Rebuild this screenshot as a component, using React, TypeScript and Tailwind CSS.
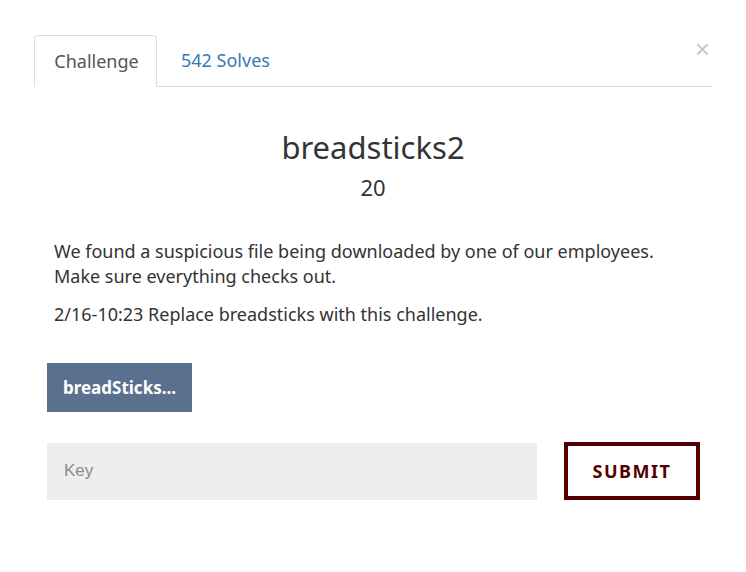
import React from "react";

export default function App() {
  return (
    <div className="relative w-[746px] h-[572px] bg-white" style={{ fontFamily: '"Noto Sans", "Open Sans", sans-serif' }}>
      <button className="absolute right-[36px] top-[36px] text-[26px] leading-none text-[#c8c8c8]" style={{ fontFamily: '"Liberation Sans", sans-serif' }}>×</button>
      <div className="pt-[35px] px-[34px]">
        <div className="flex border-b border-[#dddddd] h-[52px]">
          <div className="w-[123px] -mb-px border border-[#dddddd] border-b-white rounded-t-[4px] bg-white flex items-center justify-center text-[18px] text-[#555555] pl-[2px]">Challenge</div>
          <div className="flex items-center pl-[24px] text-[18px] text-[#337ab7]">542 Solves</div>
        </div>
      </div>
      <div className="flex flex-col items-center mt-[38px]">
        <div className="text-[31px] leading-[44px] text-[#333333]">breadsticks2</div>
        <div className="text-[22px] leading-[30px] text-[#333333] mt-[3px]">20</div>
      </div>
      <div className="px-[54px] mt-[37px] text-[18px] leading-[25px] text-[#333333]">
        <p>We found a suspicious file being downloaded by one of our employees.<br />Make sure everything checks out.</p>
        <p className="mt-[13px]">2/16-10:23 Replace breadsticks with this challenge.</p>
      </div>
      <div className="px-[47px] mt-[36px]">
        <div className="inline-flex items-center justify-center w-[145px] h-[49px] bg-[#5b708e] text-white font-bold text-[17px]">breadSticks...</div>
      </div>
      <div className="px-[47px] mt-[30px] flex items-center justify-between w-[746px] pr-[46px]">
        <div className="w-[490px] h-[57px] bg-[#eeeeee] flex items-center pl-[17px] text-[17px] text-[#8a8a8a]" style={{ fontFamily: '"Liberation Sans", sans-serif' }}>Key</div>
        <div className="w-[136px] h-[58px] border-[4px] border-[#550000] flex items-center justify-center text-[18px] font-bold tracking-[1.5px] text-[#550000]">SUBMIT</div>
      </div>
    </div>
  );
}
